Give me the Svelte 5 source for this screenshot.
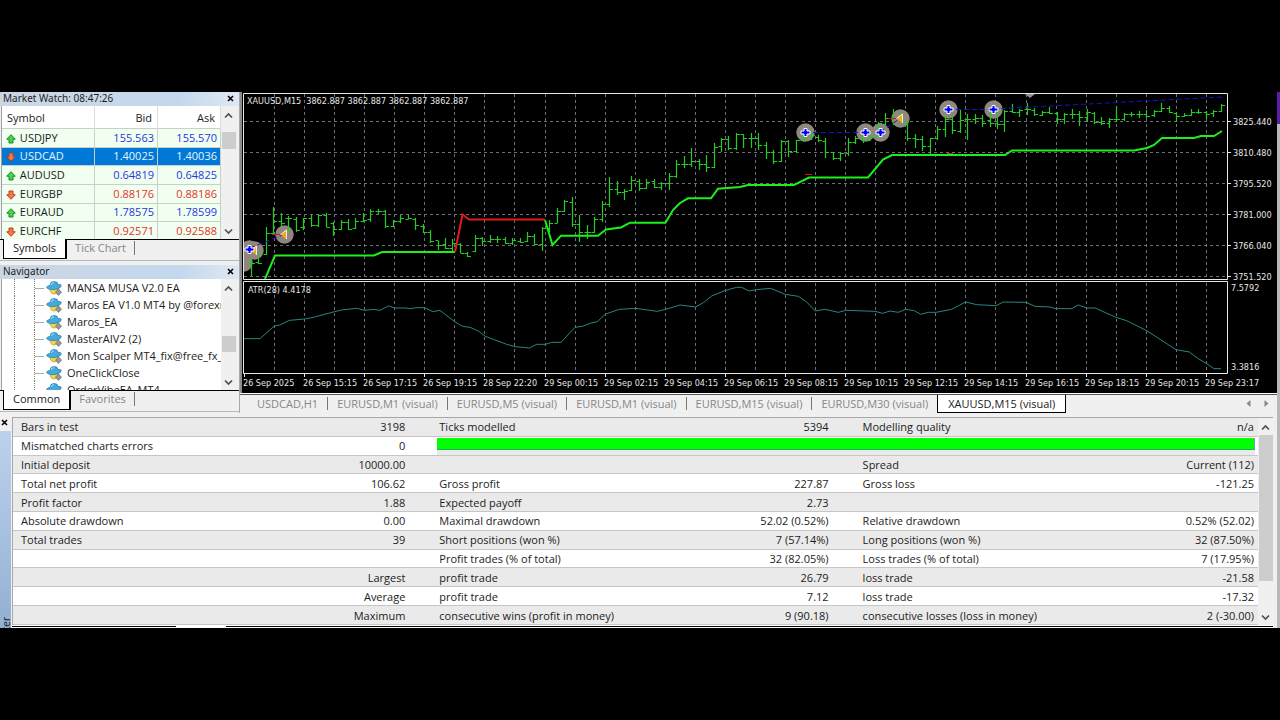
<script>
  const quotes = [
    { symbol: 'USDJPY', bid: '155.563', ask: '155.570', up: true },
    { symbol: 'USDCAD', bid: '1.40025', ask: '1.40036', up: false, selected: true },
    { symbol: 'AUDUSD', bid: '0.64819', ask: '0.64825', up: true },
    { symbol: 'EURGBP', bid: '0.88176', ask: '0.88186', up: false },
    { symbol: 'EURAUD', bid: '1.78575', ask: '1.78599', up: true },
    { symbol: 'EURCHF', bid: '0.92571', ask: '0.92588', up: false }
  ]

  const experts = [
    'MANSA MUSA V2.0 EA',
    'Maros EA V1.0 MT4 by @forexr',
    'Maros_EA',
    'MasterAIV2 (2)',
    'Mon Scalper MT4_fix@free_fx_p',
    'OneClickClose',
    'OrderVibeEA_MT4'
  ]

  const chartTabs = [
    'USDCAD,H1',
    'EURUSD,M1 (visual)',
    'EURUSD,M5 (visual)',
    'EURUSD,M1 (visual)',
    'EURUSD,M15 (visual)',
    'EURUSD,M30 (visual)',
    'XAUUSD,M15 (visual)'
  ]
  let activeTab = 6

  const report = [
    ['Bars in test', '3198', 'Ticks modelled', '5394', 'Modelling quality', 'n/a'],
    ['Mismatched charts errors', '0'],
    ['Initial deposit', '10000.00', '', '', 'Spread', 'Current (112)'],
    ['Total net profit', '106.62', 'Gross profit', '227.87', 'Gross loss', '-121.25'],
    ['Profit factor', '1.88', 'Expected payoff', '2.73', '', ''],
    ['Absolute drawdown', '0.00', 'Maximal drawdown', '52.02 (0.52%)', 'Relative drawdown', '0.52% (52.02)'],
    ['Total trades', '39', 'Short positions (won %)', '7 (57.14%)', 'Long positions (won %)', '32 (87.50%)'],
    ['', '', 'Profit trades (% of total)', '32 (82.05%)', 'Loss trades (% of total)', '7 (17.95%)'],
    ['', 'Largest', 'profit trade', '26.79', 'loss trade', '-21.58'],
    ['', 'Average', 'profit trade', '7.12', 'loss trade', '-17.32'],
    ['', 'Maximum', 'consecutive wins (profit in money)', '9 (90.18)', 'consecutive losses (loss in money)', '2 (-30.00)']
  ]

  const prices = ['3825.440', '3810.480', '3795.520', '3781.000', '3766.040', '3751.520']
  const times = [
    '26 Sep 2025', '26 Sep 15:15', '26 Sep 17:15', '26 Sep 19:15', '28 Sep 22:20', '29 Sep 00:15',
    '29 Sep 02:15', '29 Sep 04:15', '29 Sep 06:15', '29 Sep 08:15', '29 Sep 10:15', '29 Sep 12:15',
    '29 Sep 14:15', '29 Sep 16:15', '29 Sep 18:15', '29 Sep 20:15', '29 Sep 23:17'
  ]
  const gridX = Array.from({ length: 32 }, (_, i) => Math.round(274 + i * 30.06) + 0.5)

  // high, low, open, close for each M15 bar, in thirds of a pixel below the top
  const bars = [
    [510,557,518,518],[488,522,515,518],[410,495,492,430],[350,432,430,393],[368,410,393,400],
    [378,425,385,385],[382,425,388,420],[383,420,412,385],[375,410,385,405],[372,410,405,376],
    [370,412,376,410],[395,437,398,418],[390,420,418,397],[388,420,395,418],[385,418,415,392],
    [370,395,392,390],[358,395,388,362],[358,375,363,363],[360,413,363,407],[390,412,407,393],
    [375,398,393,385],[375,388,388,385],[385,420,388,405],[403,430,408,425],[420,458,425,452],
    [452,480,450,465],[443,478,462,475],[448,485,475,460],[460,490,463,488],[485,502,490,498],
    [435,485,482,445],[440,468,445,452],[435,460,452,448],[438,460,448,448],[440,462,448,458],
    [443,465,458,450],[443,458,452,455],[425,455,452,437],[432,465,438,462],[412,482,462,415],
    [390,425,415,398],[353,400,398,362],[330,365,362,333],[322,412,335,403],[375,457,403,425],
    [405,447,425,425],[382,430,425,388],[333,395,388,342],[260,350,342,298],[273,315,298,307],
    [297,330,307,302],[257,303,300,270],[267,303,272,295],[268,297,295,275],[267,293,274,290],
    [275,300,290,280],[250,300,280,257],[210,265,257,222],[197,235,222,222],[175,232,222,213],
    [207,240,213,223],[195,247,222,232],[160,235,230,170],[145,187,168,148],[137,180,148,175],
    [128,180,175,132],[133,175,133,145],[130,175,145,145],[130,180,145,165],[155,207,165,187],
    [180,222,187,213],[150,215,213,152],[150,200,153,182],[150,187,182,150],[130,155,150,140],
    [125,150,140,135],[135,155,140,150],[145,203,152,187],[187,210,187,205],[187,213,205,190],
    [145,197,190,155],[137,163,155,145],[135,160,145,150],[125,150,150,140],[95,145,140,100],
    [68,105,103,85],[57,105,85,85],[62,100,85,97],[90,153,97,143],[133,173,143,147],
    [137,183,147,168],[143,193,168,145],[108,150,145,118],[75,140,118,88],[80,133,88,120],
    [60,130,122,90],[72,150,87,87],[72,102,87,85],[75,110,85,100],[50,110,90,98],
    [60,117,98,102],[60,125,102,62],[42,68,62,65],[57,80,65,60],[40,75,58,58],
    [55,77,60,73],[62,77,75,65],[50,73,65,68],[65,103,70,88],[70,103,88,72],
    [57,87,73,73],[62,107,73,82],[58,95,82,67],[65,102,68,97],[82,105,97,100],
    [83,113,100,87],[48,97,87,87],[70,93,87,72],[65,80,72,72],[62,85,72,72],
    [60,85,72,77],[60,80,75,62],[40,67,62,53],[48,68,55,67],[65,97,68,77],
    [70,80,77,75],[57,78,75,67],[57,73,65,67],[62,87,65,72],[60,80,70,63],[42,67,62,45]
  ]
  const level = v => Math.round(90 + v / 3)
  const barPath = bars
    .map(([high, low, open, close], i) => {
      const x = Math.round(251 + i * 7.46) + 0.5
      return `M${x} ${level(high)}V${level(low)}M${x - 3} ${level(open) + 0.5}H${x}M${x} ${level(close) + 0.5}h3.5`
    })
    .join('')

  const atr = '12,188 60,188 103,150 120,147 148,133 194,129 220,124 284,107 305,102 350,97 375,103 400,100 420,103 445,90 465,96 495,96 510,98 530,95 555,95 578,107 600,103 645,138 668,151 690,154 715,165 736,181 800,205 826,212 868,216 890,205 916,205 935,199 963,199 1005,154 1027,151 1050,142 1072,137 1097,114 1138,100 1187,97 1252,106 1277,100 1320,87 1367,93 1390,80 1415,60 1457,43 1490,34 1505,34 1527,45 1550,41 1592,37 1636,55 1675,61 1700,78 1726,105 1755,100 1795,109 1817,103 1905,106 1928,112 1950,105 1975,109 1997,100 2023,104 2042,115 2065,109 2088,109 2135,100 2177,78 2210,86 2268,89 2290,78 2358,79 2385,91 2430,93 2448,98 2495,98 2515,87 2540,96 2565,96 2628,124 2660,134 2720,164 2808,221 2848,228 2875,248 2900,263 2922,278 2943,278'

  const trades = [
    { x: 243, y: 262, type: 'none' },
    { x: 254, y: 250, type: 'close' },
    { x: 249, y: 249, type: 'open' },
    { x: 284, y: 234, type: 'close' },
    { x: 805, y: 132, type: 'open' },
    { x: 865, y: 132, type: 'open' },
    { x: 880, y: 132, type: 'open' },
    { x: 900, y: 118, type: 'close' },
    { x: 948, y: 109, type: 'open' },
    { x: 993, y: 109, type: 'open' }
  ]
</script>

{#snippet cross()}
  <svg width="7" height="7" viewBox="0 0 7 7"><path d="M1 1l5 5M6 1L1 6" stroke="#000" stroke-width="1.600" /></svg>
{/snippet}

{#snippet chevron(down)}
  <svg width="9" height="7" viewBox="0 0 9 7">
    <path d={down ? 'M1 1.5l3.5 3.5L8 1.5' : 'M1 5.5L4.500 2L8 5.5'} fill="none" stroke="#505050" stroke-width="1.7" />
  </svg>
{/snippet}

<main>
  <div class="workspace">
    <aside>
      <section class="panel">
        <header>
          <span>Market Watch: 08:47:26</span>
          <button class="close" aria-label="Close Market Watch">{@render cross()}</button>
        </header>
        <div class="body watch">
          <table class="quotes">
            <thead>
              <tr><th>Symbol</th><th>Bid</th><th>Ask</th></tr>
            </thead>
            <tbody>
              {#each quotes as q}
                <tr class:selected={q.selected} class:up={q.up}>
                  <td>
                    <svg width="10" height="10" viewBox="0 0 10 10">
                      {#if q.up}
                        <path d="M5 .7L9.300 5.200H7V9H3V5.200H.7z" fill="#4fd04f" stroke="#168a22" />
                      {:else}
                        <path d="M5 9.300L.7 4.800H3V1H7V4.800H9.300z" fill="#f47a4c" stroke="#b8401c" />
                      {/if}
                    </svg>
                    {q.symbol}
                  </td>
                  <td>{q.bid}</td>
                  <td>{q.ask}</td>
                </tr>
              {/each}
            </tbody>
          </table>
          <div class="scroll">
            {@render chevron(false)}
            <div class="thumb"></div>
            {@render chevron(true)}
          </div>
        </div>
        <nav class="tabs">
          <button class="active">Symbols</button>
          <button>Tick Chart</button>
        </nav>
      </section>

      <section class="panel">
        <header>
          <span>Navigator</span>
          <button class="close" aria-label="Close Navigator">{@render cross()}</button>
        </header>
        <div class="body navigator">
          <ul>
            {#each experts as name}
              <li>
                <svg width="16" height="16" viewBox="0 0 16 16">
                  <path d="M4 8h8q0 6-4 6T4 8z" fill="#f2d54a" stroke="#b08a20" stroke-width=".6" />
                  <path d="M.6 7.500Q1 5.500 4 5.500Q4 1.500 8 1.500T12 4.500Q15 4 15.400 5.500Q15 8.500 9 9.500Q2 10 .6 7.500z" fill="#45a9dc" stroke="#2179b0" stroke-width=".7" />
                  <path d="M5 5Q5.500 2.700 8 2.700" fill="none" stroke="#a9e0f7" />
                  <path d="M12.500 9l3 3.200-3 3.200-3-3.200z" fill="#999" stroke="#666" stroke-width=".7" />
                </svg>
                <span>{name}</span>
              </li>
            {/each}
          </ul>
          <div class="scroll low">
            {@render chevron(false)}
            <div class="thumb"></div>
            {@render chevron(true)}
          </div>
        </div>
        <nav class="tabs">
          <button class="active">Common</button>
          <button>Favorites</button>
        </nav>
      </section>
    </aside>

    <section class="charts">
      <svg class="chart" viewBox="240 92 1037 301" role="img" aria-label="XAUUSD M15 chart">
        <defs>
          <clipPath id="plot"><rect x="244" y="94" width="983" height="185" /></clipPath>
        </defs>
        <rect x="240" y="92" width="1037" height="301" fill="#000" />
        <path d="M241 92V393" stroke="#8c8c8c" stroke-width="2" />

        <g class="grid">
          {#each gridX as x}
            <path d="M{x} 94V279M{x} 283V373" />
          {/each}
          {#each prices as _, i}
            <path d="M244 {121.5 + i * 31}H1227" />
          {/each}
        </g>

        <g clip-path="url(#plot)">
          {#each trades as t}
            <circle cx={t.x + 0.5} cy={t.y + 0.5} r="9.200" fill="#8f867e" />
          {/each}
          <path class="bars" d={barPath} />
          <path class="link" d="M250 248L285 234M805 132.500H865M880 132L901 118M948 109.500H993M993 109L1222 97" />
          <path d="M272 234.500h8M805 174.500h7M888 118.500h9M947 153.500h6" stroke="#d01818" fill="none" />
          <polyline class="trend" points="265,279 275,255.5 374,255.5 382,252 455,252" />
          <polyline class="trend" points="545,220 552.5,245 561,235.7 598,235.7 606,229.5 621,227.5 630,222.7 665.5,222.7 673,210 680,203 688,198.3 711,198.3 718,188.7 740,187 748,185 794,185 809,177.5 868,177.5 883,159.5 892,155 1005,155 1012,150.5 1134,150.5 1147,148 1154,145 1162,138 1194,138 1201,136 1214,136 1222,131" />
          <polyline class="trend down" points="455,252 462.5,214.5 469,219.5 545,219.5" />
          {#each trades as t}
            {#if t.type === 'open'}
              <path transform="translate({t.x + 0.5} {t.y + 0.5})" d="M-1.500-4h3v2.500h3v3h-3V4h-3V1.500h-3v-3h3z" fill="#00f" stroke="#fff" stroke-width="1" />
            {:else if t.type === 'close'}
              <path transform="translate({t.x} {t.y + 0.5})" d="M2.500-5v10L-3.500 0z" fill="#f0a820" />
              <path transform="translate({t.x} {t.y + 0.5})" d="M-3.500 0L2.500-4.500V4.500" fill="none" stroke="#fff" stroke-width=".8" />
            {/if}
          {/each}
        </g>
        <path d="M1025 94h10l-5 4z" fill="#8a9299" />

        <polyline class="atr" transform="translate(240 276) scale(0.33333)" points={atr} />

        <path class="frame" d="M243.500 93.500H1227.500V279.500H243.500zM243.500 281.500H1227.500V373.500H243.500z" />
        <g class="frame">
          {#each times as _, i}
            <path d="M{Math.round(244 + i * 60.12) + 0.5} 374v3" />
          {/each}
          {#each prices as _, i}
            <path d="M1228 {121.5 + i * 31}h3" />
          {/each}
        </g>
        <text x="247" y="104" xml:space="preserve">XAUUSD,M15  3862.887 3862.887 3862.887 3862.887</text>
        <text x="248" y="293">ATR(28) 4.4178</text>
        {#each prices as p, i}
          <text x="1233" y={125 + i * 31}>{p}</text>
        {/each}
        <text x="1231" y="291">7.5792</text>
        <text x="1231" y="370">3.3816</text>
        {#each times as t, i}
          <text x={Math.round(243 + i * 60.12)} y="386">{t}</text>
        {/each}
      </svg>
      <nav class="chart-tabs">
        {#each chartTabs as tab, i}
          <button class:active={activeTab === i} on:click={() => (activeTab = i)}>{tab}</button>
        {/each}
        <span class="arrows">
          <svg width="5" height="7" viewBox="0 0 5 7"><path d="M4.500 0v7L.5 3.500z" fill="#888" /></svg>
          <svg width="5" height="7" viewBox="0 0 5 7"><path d="M.5 0v7l4-3.500z" fill="#888" /></svg>
        </span>
      </nav>
    </section>
    <div class="edge"></div>
  </div>

  <section class="tester">
    <div class="strip">
      <button class="close" aria-label="Close Tester">{@render cross()}</button>
      <div class="caption"><span>Tester</span></div>
    </div>
    <div class="results">
      <div class="report">
        <table>
          <colgroup>
            <col class="name" /><col class="first" /><col class="name" /><col class="second" /><col class="name" /><col />
          </colgroup>
          <tbody>
            {#each report as row}
              <tr>
                {#each row as cell}
                  <td>{cell}</td>
                {/each}
                {#if row.length === 2}
                  <td class="quality" colspan="4"><div></div></td>
                {/if}
              </tr>
            {/each}
          </tbody>
        </table>
        <div class="scroll long">
          {@render chevron(false)}
          <div class="thumb"></div>
          {@render chevron(true)}
        </div>
      </div>
      <div class="bottom"><i></i><i></i></div>
    </div>
    <div class="edge plain"></div>
  </section>
</main>

<style>
  :global(body) {
    background: #000;
  }

  main {
    padding: 92px 0;
    font: 11px/17px 'Open Sans', sans-serif;
    color: #1c1c1c;
  }

  button {
    padding: 0;
    border: 0;
    background: none;
    font: inherit;
    color: inherit;
  }

  table {
    border-collapse: collapse;
    table-layout: fixed;
    width: 100%;
  }

  svg {
    flex: none;
  }

  .workspace {
    display: flex;
    background: #f0f0f0;
  }

  aside {
    display: flex;
    flex-direction: column;
    gap: 4px;
    flex: none;
    width: 240px;
    box-sizing: border-box;
    border-right: 1px solid #a8a8a8;
  }

  .panel {
    border-bottom: 1px solid #b8b8b8;
  }

  .panel header {
    display: flex;
    align-items: flex-start;
    justify-content: space-between;
    height: 14px;
    padding: 0 5px 0 3px;
    font: 10px/12px 'Noto Sans', sans-serif;
    background: linear-gradient(90deg, #ccd6e2, #c3d8ee 75%, #dfe8f2);
  }

  .close {
    display: flex;
    align-items: center;
  }

  header .close {
    height: 13px;
  }

  .body {
    display: flex;
    overflow: hidden;
    margin: 0 3px 0 1px;
    background: #fff;
    border-left: 1px solid #a0a0a0;
  }

  .watch {
    height: 133px;
  }

  .navigator {
    height: 111px;
  }

  .quotes {
    height: 135px;
  }

  .quotes th {
    height: 22px;
    padding: 0 5px;
    font-weight: normal;
    text-align: right;
    border-right: 1px solid #ddd;
  }

  .quotes th:first-child {
    width: 82px;
    text-align: left;
  }

  .quotes td {
    padding: 0 3px;
    line-height: 16px;
    text-align: right;
    color: #e3342a;
    background: #f1fff1;
    border: 1px solid #c9d0c9;
    border-left: 0;
  }

  .quotes .up td {
    color: #2a35e0;
  }

  .quotes td:first-child,
  .quotes .up td:first-child {
    padding-left: 4px;
    text-align: left;
    color: #1c1c1c;
  }

  .quotes td svg {
    margin-right: 1px;
    vertical-align: -2px;
  }

  .quotes .selected td,
  .quotes .selected td:first-child {
    color: #e8f4ff;
    background: #0078d7;
  }

  .scroll {
    display: flex;
    flex: none;
    flex-direction: column;
    justify-content: space-between;
    align-items: center;
    width: 15px;
    padding: 6px 0 4px;
    box-sizing: border-box;
    background: #f0f0f0;
  }

  .thumb {
    width: 14px;
    height: 17px;
    margin-bottom: 66px;
    background: #cdcdcd;
  }

  .low .thumb {
    margin: 16px 0 0;
    height: 16px;
  }

  .tabs {
    display: flex;
    height: 20px;
    padding-left: 3px;
    border-top: 1px solid #000;
    color: #868686;
  }

  .tabs button {
    height: 16px;
    padding: 0 8px;
    line-height: 16px;
  }

  .tabs .active {
    margin-top: -1px;
    height: 20px;
    padding: 0 9px 2px;
    color: #222;
    background: #fff;
    border: solid #000;
    border-width: 0 2px 1px 1px;
  }

  .tabs button:last-child {
    height: 14px;
    margin-top: 1px;
    border-right: 1px solid #777;
    line-height: 14px;
  }

  ul {
    flex: 1;
    min-width: 0;
    margin: 0;
    padding: 0 0 0 11px;
    overflow: hidden;
    list-style: none;
  }

  li {
    display: flex;
    align-items: center;
    height: 17px;
    margin-left: 1px;
    border-left: 1px dotted #777;
    background: linear-gradient(#aaa, #aaa) 20px 9px / 9px 1px no-repeat;
    white-space: nowrap;
  }

  li::before {
    content: '';
    flex: none;
    align-self: stretch;
    width: 19px;
    border-right: 1px dotted #777;
  }

  li svg {
    margin: 0 5px 0 11px;
  }

  .charts {
    flex: 1;
    min-width: 0;
  }

  .chart {
    display: block;
    width: 100%;
  }

  .chart path,
  .chart polyline {
    vector-effect: non-scaling-stroke;
  }

  .chart text {
    font: 9px 'DejaVu Sans Condensed', 'DejaVu Sans', sans-serif;
    fill: #e6e6e6;
  }

  .grid path {
    stroke: #6c7078;
    stroke-dasharray: 3 3;
  }

  .bars {
    fill: none;
    stroke: #22cc22;
    stroke-width: 1.2;
  }

  .link {
    fill: none;
    stroke: #1414c8;
    stroke-dasharray: 5 3;
  }

  .trend {
    fill: none;
    stroke: #1cf01c;
    stroke-width: 2;
  }

  .trend.down {
    stroke: #e01c1c;
  }

  .atr {
    fill: none;
    stroke: #2b8580;
    stroke-width: 1;
  }

  .frame {
    fill: none;
    stroke: #e8e8e8;
  }

  .chart-tabs {
    display: flex;
    height: 20px;
    box-sizing: border-box;
    padding-left: 8px;
    border-top: 1px solid #fff;
    box-shadow: inset 0 1px #555;
    color: #868686;
  }

  .chart-tabs button {
    height: 13px;
    margin-top: 3px;
    padding: 0 9px;
    line-height: 13px;
    border-right: 1px solid #777;
    white-space: nowrap;
  }

  .chart-tabs button:nth-last-child(3) {
    border-right: 0;
  }

  .chart-tabs .active {
    height: 18px;
    margin-top: 1px;
    padding: 0 10px;
    color: #222;
    background: #fff;
    border: solid #000;
    border-width: 0 1px 1px;
  }

  .arrows {
    display: flex;
    align-items: center;
    gap: 13px;
    margin-left: auto;
    padding-right: 8px;
  }

  .edge {
    flex: none;
    width: 3px;
    background: linear-gradient(#5a1fa8 32px, #b8b8b8 32px);
  }

  .edge.plain {
    background: #b8b8b8;
  }

  .tester {
    display: flex;
    background: #f0f0f0;
  }

  .strip {
    display: flex;
    flex: none;
    flex-direction: column;
    width: 12px;
  }

  .strip .close {
    height: 18px;
    padding-left: 1px;
  }

  .caption {
    flex: 1;
    position: relative;
    width: 11px;
    overflow: hidden;
    background: linear-gradient(#bcd2ec, #93b0d2);
  }

  .caption span {
    position: absolute;
    top: 186px;
    left: 0;
    writing-mode: vertical-rl;
    transform: rotate(180deg);
    font-size: 10px;
    line-height: 12px;
  }

  .results {
    flex: 1;
    min-width: 0;
    margin-right: 4px;
    padding-top: 4px;
  }

  .report {
    display: flex;
    border: solid #a8a8a8;
    border-width: 1px 0 0 1px;
  }

  .report table {
    height: 207px;
  }

  .report td {
    padding: 0 26px 0 8px;
    line-height: 17px;
    white-space: nowrap;
    background: #fff;
    border-bottom: 1px solid #c6c6c6;
  }

  .report tr:nth-child(odd) td {
    background: #eaeaea;
  }

  .report td:nth-child(even) {
    padding: 0 26px 0 0;
    text-align: right;
  }

  .report td:nth-child(6) {
    padding-right: 4px;
  }

  .report td.quality {
    padding: 0 3px 0 6px;
    vertical-align: top;
  }

  .quality div {
    height: 11px;
    margin-top: 1px;
    background: #0f0;
    border-bottom: 1px solid #12b45c;
    border-right: 1px solid #6a9fd8;
    box-shadow: 0 5px #eaeaea;
  }

  .name {
    width: 20%;
  }

  .first {
    width: 13.6%;
  }

  .second {
    width: 14%;
  }

  .long {
    padding: 6px 0 4px;
  }

  .long .thumb {
    flex: 1;
    margin: 4px 0 33px;
  }

  .bottom {
    display: flex;
    gap: 50px;
    height: 3px;
    background: #fff;
  }

  .bottom i {
    flex: 1;
    height: 1px;
    margin-top: 1px;
    background: #000;
  }

  .bottom i:first-child {
    flex: 0 0 164px;
  }
</style>
